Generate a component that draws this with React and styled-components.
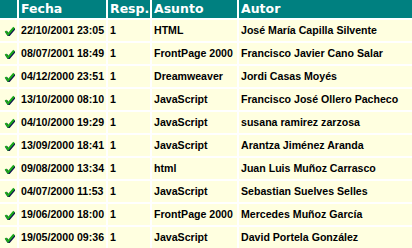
import styled, { createGlobalStyle } from "styled-components";

const posts = [
  ["22/10/2001 23:05", "1", "HTML", "José María Capilla Silvente"],
  ["08/07/2001 18:49", "1", "FrontPage 2000", "Francisco Javier Cano Salar"],
  ["04/12/2000 23:51", "1", "Dreamweaver", "Jordi Casas Moyés"],
  ["13/10/2000 08:10", "1", "JavaScript", "Francisco José Ollero Pacheco"],
  ["04/10/2000 19:29", "1", "JavaScript", "susana ramirez zarzosa"],
  ["13/09/2000 18:41", "1", "JavaScript", "Arantza Jiménez Aranda"],
  ["09/08/2000 13:34", "1", "html", "Juan Luis Muñoz Carrasco"],
  ["04/07/2000 11:53", "1", "JavaScript", "Sebastian Suelves Selles"],
  ["19/06/2000 18:00", "1", "FrontPage 2000", "Mercedes Muñoz García"],
  ["19/05/2000 09:36", "1", "JavaScript", "David Portela González"],
];

const CheckIcon = () => (
  <svg width="11" height="10" viewBox="0 0 11 10">
    <path d="M1.5 5 L4 8.5 L10 1.5" fill="none" stroke="#101050" strokeWidth="2.4" transform="translate(0.7 0.8)" />
    <path d="M1.5 5 L4 8.5 L10 1.5" fill="none" stroke="#1aa81a" strokeWidth="2" />
  </svg>
);

const App = () => {
  return (
    <>
      <GlobalStyle />
      <Table>
        <Row $head>
          <HeadCell />
          <HeadCell>Fecha</HeadCell>
          <HeadCell>Resp.</HeadCell>
          <HeadCell>Asunto</HeadCell>
          <HeadCell>Autor</HeadCell>
        </Row>
        {posts.map((p) => (
          <Row key={p[0]}>
            <IconCell>
              <CheckIcon />
            </IconCell>
            {p.map((v, i) => (
              <Cell key={i}>{v}</Cell>
            ))}
          </Row>
        ))}
      </Table>
    </>
  );
};

export default App;

//styles
const GlobalStyle = createGlobalStyle`
  body {
    margin: 0;
    background: #ffffff;
    overflow: hidden;
  }
`;
const Table = styled.div`
  display: flex;
  flex-direction: column;
  gap: 2px;
  width: 100%;
`;
const Row = styled.div`
  display: grid;
  grid-template-columns: 17px 87px 42px 85px 1fr;
  gap: 2px;
  height: ${(p) => (p.$head ? "18px" : "21px")};
`;
const HeadCell = styled.div`
  background: #008080;
  color: #ffffff;
  font-family: "DejaVu Sans", Verdana, sans-serif;
  font-weight: bold;
  font-size: 12.5px;
  line-height: 18px;
  padding-left: 2px;
  white-space: nowrap;
`;
const Cell = styled.div`
  background: #ffffe0;
  color: #000000;
  font-family: "Liberation Sans", Arial, sans-serif;
  font-weight: bold;
  font-size: 10.6px;
  line-height: 21px;
  padding-left: 2px;
  white-space: nowrap;
  overflow: hidden;
`;
const IconCell = styled.div`
  background: #ffffe0;
  display: flex;
  align-items: center;
  padding-left: 4px;
`;
